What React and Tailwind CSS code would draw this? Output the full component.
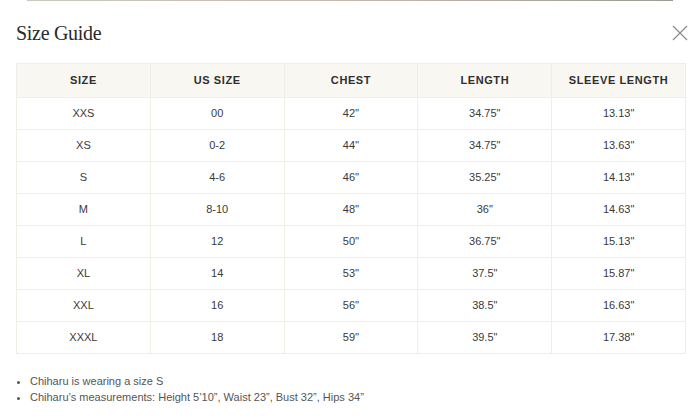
import React from "react";

const rows = [
  ["XXS", "00", "42''", '34.75"', '13.13"'],
  ["XS", "0-2", "44''", '34.75"', '13.63"'],
  ["S", "4-6", "46''", '35.25"', '14.13"'],
  ["M", "8-10", "48''", '36"', '14.63"'],
  ["L", "12", "50''", '36.75"', '15.13"'],
  ["XL", "14", "53''", '37.5"', '15.87"'],
  ["XXL", "16", "56''", '38.5"', '16.63"'],
  ["XXXL", "18", "59''", '39.5"', '17.38"'],
];

const heads = ["SIZE", "US SIZE", "CHEST", "LENGTH", "SLEEVE LENGTH"];

const App = () => {
  return (
    <div className="w-[700px] h-[417px] bg-white overflow-hidden font-['Liberation_Sans',Arial,sans-serif]">
      <div className="h-px mx-[27px] bg-gradient-to-r from-[#c9c9c0] via-[#c7b8ac] to-[#9a9c94]" />
      <div className="flex items-center justify-between pl-4 pr-3 pt-[18px] h-[62px] pb-[17px]">
        <h2 className="text-[20px] text-[#2a2a2a] font-['Liberation_Serif',serif] tracking-[-0.3px]">
          Size Guide
        </h2>
        <svg width="16" height="16" viewBox="0 0 16 16" className="text-[#8a8a8a]">
          <path d="M1 1L15 15M15 1L1 15" stroke="currentColor" strokeWidth="1.2" />
        </svg>
      </div>
      <table className="ml-4 w-[670px] border-collapse table-fixed">
        <thead>
          <tr className="h-[34px] bg-[#f9f7f1]">
            {heads.map((h) => (
              <th
                key={h}
                className="border border-[#f1eee5] text-[11px] font-bold tracking-[0.6px] text-[#2f2f2f]"
              >
                {h}
              </th>
            ))}
          </tr>
        </thead>
        <tbody>
          {rows.map((row) => (
            <tr key={row[0]} className="h-[32px]">
              {row.map((c, i) => (
                <td
                  key={i}
                  className="border border-[#f1eee5] text-center text-[11px] text-[#3a3a3a]"
                >
                  {c}
                </td>
              ))}
            </tr>
          ))}
        </tbody>
      </table>
      <ul className="mt-[19px] pl-[30px] text-[11px] leading-[16px] text-[#555] list-disc">
        <li>Chiharu is wearing a size S</li>
        <li>Chiharu’s measurements: Height 5’10”, Waist 23”, Bust 32”, Hips 34”</li>
      </ul>
    </div>
  );
};

export default App;
